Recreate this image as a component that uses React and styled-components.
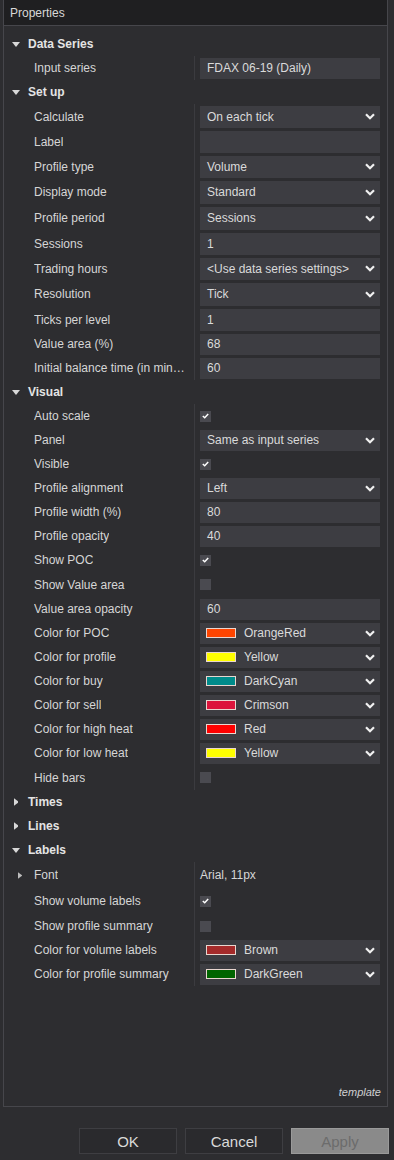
import React from "react";
import styled, { createGlobalStyle } from "styled-components";

const GlobalStyle = createGlobalStyle`
    html, body {
        margin: 0;
        padding: 0;
        background: #2d2d30;
    }
    body {
        font-family: "Liberation Sans", Arial, sans-serif;
        font-size: 12px;
        color: #d6d6d6;
    }
`;

const Page = styled.div`
    width: 394px;
    height: 1160px;
    display: flex;
    flex-direction: column;
`;

const Frame = styled.div`
    margin-left: 3px;
    width: 383px;
    height: 1106px;
    border: 1px solid #46464b;
    border-top: none;
    display: flex;
    flex-direction: column;
`;

const TitleBar = styled.div`
    height: 25px;
    background: #1f1f21;
    border-bottom: 1px solid #46464b;
    display: flex;
    align-items: center;
    padding-left: 6px;
    font-size: 12px;
    color: #d8d8d8;
`;

const Grid = styled.div`
    flex: 1;
    padding-top: 6px;
    display: flex;
    flex-direction: column;
`;

const Header = styled.div`
    height: 24px;
    display: flex;
    align-items: center;
    font-weight: bold;
    color: #e4e4e4;
`;

const Toggle = styled.span`
    width: 24px;
    display: flex;
    justify-content: center;
    align-items: center;
`;

const Row = styled.div`
    height: ${p => p.h || 24}px;
    display: grid;
    grid-template-columns: 191px 1fr;
`;

const LabelCell = styled.div`
    border-right: 1px solid #3b3b3f;
    display: flex;
    align-items: center;
    padding-left: ${p => p.sub ? 14 : 30}px;
    padding-right: 4px;
    overflow: hidden;
`;

const LabelText = styled.span`
    white-space: nowrap;
    overflow: hidden;
    text-overflow: ellipsis;
    color: #d6d6d6;
`;

const SubToggle = styled.span`
    width: 16px;
    display: flex;
    align-items: center;
`;

const ValueCell = styled.div`
    display: flex;
    align-items: center;
    padding-left: 5px;
    padding-right: 6px;
`;

const Field = styled.div`
    width: 180px;
    height: calc(100% - 3px);
    background: #3d3d42;
    display: flex;
    align-items: center;
    padding: 0 5px 0 7px;
    box-sizing: border-box;
    color: #dadada;
`;

const FieldText = styled.span`
    flex: 1;
    white-space: nowrap;
`;

const PlainValue = styled.span`
    color: #d6d6d6;
`;

const Check = styled.span`
    width: 11px;
    height: 11px;
    background: #4a4a50;
    display: flex;
    align-items: center;
    justify-content: center;
`;

const Swatch = styled.span`
    width: 28px;
    height: 8px;
    background: ${p => p.color};
    border: 1px solid #e9d6d0;
    margin-right: 8px;
    margin-left: -1px;
`;

const Footer = styled.div`
    text-align: right;
    font-style: italic;
    font-size: 11px;
    color: #d0d0d0;
    padding: 0 6px 8px 0;
`;

const ButtonBar = styled.div`
    margin-top: 21px;
    display: flex;
    justify-content: flex-end;
    gap: 8px;
    padding-right: 5px;
`;

const Button = styled.div`
    width: 96px;
    height: 24px;
    border: 1px solid ${p => p.disabled ? "#9a9a9a" : "#3e3e42"};
    background: ${p => p.disabled ? "#8a8a8a" : "#2a2a2d"};
    color: ${p => p.disabled ? "#6c6c6c" : "#dadada"};
    font-size: 15px;
    display: flex;
    align-items: center;
    justify-content: center;
`;

const Down = () => (
    <svg width="8" height="5" viewBox="0 0 8 5"><path d="M0 0 L8 0 L4 5 Z" fill="#d8d8d8" /></svg>
);

const Right = ({ size = 8, color = "#d8d8d8" }) => (
    <svg width={size * 0.6} height={size} viewBox="0 0 5 8"><path d="M0 0 L5 4 L0 8 Z" fill={color} /></svg>
);

const Chevron = () => (
    <svg width="10" height="7" viewBox="0 0 10 7">
        <path d="M1 1.2 L5 5.2 L9 1.2" fill="none" stroke="#f0f0f0" strokeWidth="2.2" />
    </svg>
);

const Tick = () => (
    <svg width="7" height="6" viewBox="0 0 7 6">
        <path d="M0.8 3 L2.7 4.8 L6.2 1" fill="none" stroke="#ffffff" strokeWidth="1.5" />
    </svg>
);

const sections = [
    {
        title: "Data Series", open: true, rows: [
            { label: "Input series", type: "text", value: "FDAX 06-19 (Daily)" },
        ]
    },
    {
        title: "Set up", open: true, rows: [
            { label: "Calculate", type: "select", value: "On each tick", h: 25 },
            { label: "Label", type: "text", value: "", h: 25 },
            { label: "Profile type", type: "select", value: "Volume", h: 25 },
            { label: "Display mode", type: "select", value: "Standard", h: 26 },
            { label: "Profile period", type: "select", value: "Sessions", h: 26 },
            { label: "Sessions", type: "text", value: "1", h: 25 },
            { label: "Trading hours", type: "select", value: "<Use data series settings>", h: 25 },
            { label: "Resolution", type: "select", value: "Tick", h: 26 },
            { label: "Ticks per level", type: "text", value: "1", h: 25 },
            { label: "Value area (%)", type: "text", value: "68" },
            { label: "Initial balance time (in minutes)", type: "text", value: "60" },
        ]
    },
    {
        title: "Visual", open: true, rows: [
            { label: "Auto scale", type: "check", value: true },
            { label: "Panel", type: "select", value: "Same as input series" },
            { label: "Visible", type: "check", value: true },
            { label: "Profile alignment", type: "select", value: "Left" },
            { label: "Profile width (%)", type: "text", value: "80" },
            { label: "Profile opacity", type: "text", value: "40" },
            { label: "Show POC", type: "check", value: true },
            { label: "Show Value area", type: "check", value: false, h: 25 },
            { label: "Value area opacity", type: "text", value: "60" },
            { label: "Color for POC", type: "color", value: "OrangeRed", color: "#ff4500" },
            { label: "Color for profile", type: "color", value: "Yellow", color: "#ffff00" },
            { label: "Color for buy", type: "color", value: "DarkCyan", color: "#008b8b" },
            { label: "Color for sell", type: "color", value: "Crimson", color: "#dc143c" },
            { label: "Color for high heat", type: "color", value: "Red", color: "#ff0000" },
            { label: "Color for low heat", type: "color", value: "Yellow", color: "#ffff00" },
            { label: "Hide bars", type: "check", value: false, h: 25 },
        ]
    },
    { title: "Times", open: false, rows: [] },
    { title: "Lines", open: false, rows: [] },
    {
        title: "Labels", open: true, rows: [
            { label: "Font", type: "plain", value: "Arial, 11px", sub: true, h: 26 },
            { label: "Show volume labels", type: "check", value: true, h: 26 },
            { label: "Show profile summary", type: "check", value: false },
            { label: "Color for volume labels", type: "color", value: "Brown", color: "#a52a2a" },
            { label: "Color for profile summary", type: "color", value: "DarkGreen", color: "#006400" },
        ]
    },
];

function Value({ row }) {
    if (row.type === "check") {
        return <Check>{row.value && <Tick />}</Check>;
    }
    if (row.type === "plain") {
        return <PlainValue>{row.value}</PlainValue>;
    }
    return (
        <Field>
            {row.type === "color" && <Swatch color={row.color} />}
            <FieldText>{row.value}</FieldText>
            {(row.type === "select" || row.type === "color") && <Chevron />}
        </Field>
    );
}

function PropertyRow({ row }) {
    return (
        <Row h={row.h}>
            <LabelCell sub={row.sub}>
                {row.sub && <SubToggle><Right size={7} color="#bdbdbd" /></SubToggle>}
                <LabelText>{row.label}</LabelText>
            </LabelCell>
            <ValueCell>
                <Value row={row} />
            </ValueCell>
        </Row>
    );
}

export default function App() {
    return (
        <Page>
            <GlobalStyle />
            <Frame>
                <TitleBar>Properties</TitleBar>
                <Grid>
                    {sections.map(section => (
                        <React.Fragment key={section.title}>
                            <Header>
                                <Toggle>{section.open ? <Down /> : <Right />}</Toggle>
                                {section.title}
                            </Header>
                            {section.open && section.rows.map(row => (
                                <PropertyRow key={row.label} row={row} />
                            ))}
                        </React.Fragment>
                    ))}
                </Grid>
                <Footer>template</Footer>
            </Frame>
            <ButtonBar>
                <Button>OK</Button>
                <Button>Cancel</Button>
                <Button disabled>Apply</Button>
            </ButtonBar>
        </Page>
    );
}
